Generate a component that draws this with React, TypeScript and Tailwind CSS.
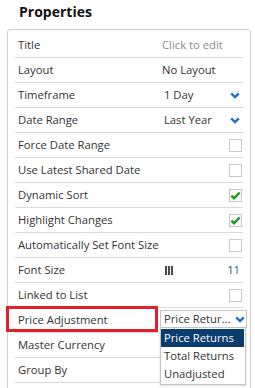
import type { ReactNode } from "react"

const font = { fontFamily: '"Open Sans", "Liberation Sans", sans-serif' }

function Chevron() {
  return (
    <svg width="10" height="7" viewBox="0 0 10 7" className="shrink-0">
      <polyline points="1.2,1.3 5,5 8.8,1.3" fill="none" stroke="#1b74c5" strokeWidth="2.4" />
    </svg>
  )
}

function Checkbox({ checked }: { checked?: boolean }) {
  return (
    <div className="flex h-[13px] w-[13px] items-center justify-center border border-[#c9c9c9] bg-white">
      {checked && (
        <svg width="11" height="9" viewBox="0 0 11 9">
          <polyline points="1.3,4.6 4,7.2 9.7,1.5" fill="none" stroke="#1e9a1e" strokeWidth="2.4" />
        </svg>
      )}
    </div>
  )
}

function Row({ label, children, extra }: { label: string; children?: ReactNode; extra?: ReactNode }) {
  return (
    <div className="relative flex h-[25px] items-center border-b border-[#dadada] pl-[3px]">
      <span className="flex-1 text-[11.25px] text-[#333]">{label}</span>
      <div className="flex w-[81px] items-center">{children}</div>
      {extra}
    </div>
  )
}

function SelectValue({ value }: { value: string }) {
  return (
    <div className="flex flex-1 items-center justify-between pl-[2px] pr-[3px]">
      <span className="text-[11.25px] text-[#333]">{value}</span>
      <Chevron />
    </div>
  )
}

function CheckValue({ checked }: { checked?: boolean }) {
  return (
    <div className="flex flex-1 justify-end pr-[1px]">
      <Checkbox checked={checked} />
    </div>
  )
}

export default function App() {
  return (
    <div className="h-[388px] w-[255px] overflow-hidden bg-white" style={font}>
      <div className="h-[29px] pl-[19px] pt-[1px] text-[14px] font-bold leading-[22px] text-[#111]">Properties</div>
      <div className="ml-[7px] h-[380px] w-[244px] rounded-[3px] border border-[#d2d2d2] px-[7px] pt-[3px]">
        <Row label="Title">
          <span className="text-[11.25px] text-[#8c8c8c]">Click to edit</span>
        </Row>
        <Row label="Layout">
          <span className="text-[11.25px] text-[#333]">No Layout</span>
        </Row>
        <Row label="Timeframe">
          <SelectValue value="1 Day" />
        </Row>
        <Row label="Date Range">
          <SelectValue value="Last Year" />
        </Row>
        <Row label="Force Date Range">
          <CheckValue />
        </Row>
        <Row label="Use Latest Shared Date">
          <CheckValue />
        </Row>
        <Row label="Dynamic Sort">
          <CheckValue checked />
        </Row>
        <Row label="Highlight Changes">
          <CheckValue checked />
        </Row>
        <Row label="Automatically Set Font Size">
          <CheckValue />
        </Row>
        <Row label="Font Size">
          <div className="flex flex-1 items-center justify-between pl-[3px] pr-[3px]">
            <div className="flex gap-[1px]">
              <span className="h-[9px] w-[2px] bg-[#4a4a4a]" />
              <span className="h-[9px] w-[2px] bg-[#4a4a4a]" />
              <span className="h-[9px] w-[2px] bg-[#4a4a4a]" />
            </div>
            <span className="text-[11.25px] text-[#2a5b96]">11</span>
          </div>
        </Row>
        <Row label="Linked to List">
          <CheckValue />
        </Row>
        <Row
          label="Price Adjustment"
          extra={
            <>
              <div className="absolute left-[-9px] top-[-2px] h-[26px] w-[152px] border-[3px] border-[#e3202a]" />
              <div className="absolute left-[145px] top-[19px] z-10 h-[58px] w-[86px] border border-[#c4c4c4] bg-white pr-[1px] pt-[1px] shadow-[0_1px_2px_rgba(0,0,0,0.15)]">
                <div className="flex h-[18px] items-center bg-[#0b3c6e] pl-[3px] text-[11.25px] text-white">Price Returns</div>
                <div className="flex h-[18px] items-center pl-[3px] text-[11.25px] text-[#333]">Total Returns</div>
                <div className="flex h-[18px] items-center pl-[3px] text-[11.25px] text-[#333]">Unadjusted</div>
              </div>
            </>
          }
        >
          <div className="-ml-[2px] mb-[4px] mt-[2px] flex h-[18px] w-[87px] shrink-0 items-center justify-between border border-b-0 border-[#c4c4c4] pl-[3px] pr-[1px]">
            <span className="truncate text-[11.25px] text-[#333]">Price Retur...</span>
            <Chevron />
          </div>
        </Row>
        <Row label="Master Currency" />
        <Row label="Group By" />
      </div>
    </div>
  )
}
